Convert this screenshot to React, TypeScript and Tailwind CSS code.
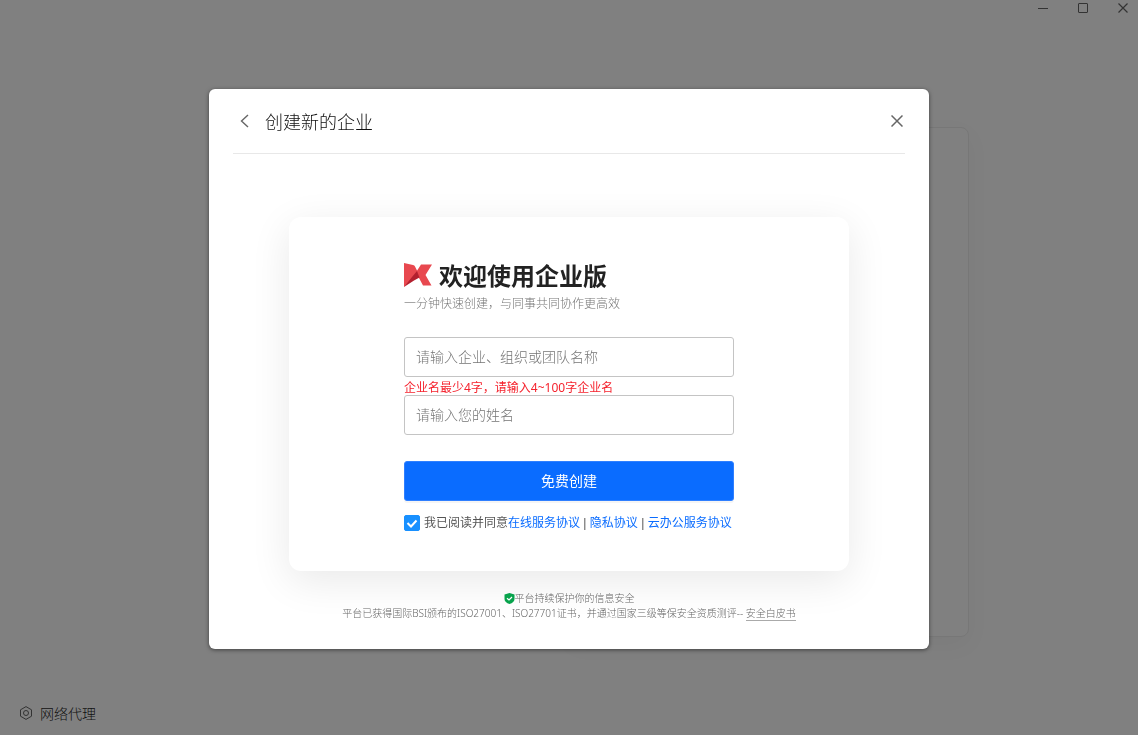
import React from "react";

function Logo() {
  return (
    <svg className="h-6 w-7 shrink-0" viewBox="0 0 28 24" aria-hidden="true">
      <path d="M0 0L9 2Q10.500 2.300 11 3.500L13.500 8.500L12 12L0 24Z" fill="#e8484f" />
      <path d="M17 1.500H28L21.500 12L27.500 22.500H19L15 15L12.500 8.500Z" fill="#e8484f" />
      <path d="M13 8L15.500 14.500L10 17.500L0 24L8 14Z" fill="#b3202f" />
    </svg>
  );
}

function WindowControls() {
  const icon = "h-3 w-3";
  const button = "flex h-4 w-10 items-center justify-center text-[#333]";
  return (
    <header className="flex justify-end">
      <div className="-mr-[5px] flex">
        <button type="button" aria-label="最小化" className={button}>
          <svg className={icon} viewBox="0 0 12 12" fill="none" stroke="currentColor"><path d="M1 6.500H11" /></svg>
        </button>
        <button type="button" aria-label="最大化" className={button}>
          <svg className={icon} viewBox="0 0 12 12" fill="none" stroke="currentColor"><rect x="1.500" y="1.500" width="9" height="9" rx="0.500" /></svg>
        </button>
        <button type="button" aria-label="关闭窗口" className={button}>
          <svg className={icon} viewBox="0 0 12 12" fill="none" stroke="currentColor" strokeWidth="1.200"><path d="M1.500 1.500L10.500 10.500M10.500 1.500L1.500 10.500" /></svg>
        </button>
      </div>
    </header>
  );
}

function CreateForm() {
  const field =
    "block h-10 w-full rounded-[3px] border border-[#c4c4c4] bg-white px-[11px] pb-0.5 text-sm text-[#222] outline-none placeholder:text-[#757575]";
  return (
    <form
      className="mx-auto w-full max-w-[560px] rounded-xl bg-white px-6 pt-11 pb-[38px] shadow-[0_10px_40px_rgba(0,0,0,0.09)]"
      onSubmit={(e) => e.preventDefault()}
    >
      <div className="mx-auto max-w-[330px]">
        <div className="flex items-center gap-[7px]">
          <Logo />
          <h2 className="text-2xl leading-7 font-bold text-[#222]">欢迎使用企业版</h2>
        </div>
        <p className="mt-1 text-xs leading-5 text-[#757575]">一分钟快速创建，与同事共同协作更高效</p>
        <div className="mt-6">
          <input type="text" aria-label="企业名称" placeholder="请输入企业、组织或团队名称" className={field} />
          <p
            role="alert"
            className="pt-1 font-['Noto_Sans','Noto_Sans_CJK_SC',sans-serif] text-xs leading-[14px] font-normal text-[#f5222d]"
          >
            企业名最少4字，请输入4~100字企业名
          </p>
          <input type="text" aria-label="姓名" placeholder="请输入您的姓名" className={field} />
        </div>
        <button
          type="submit"
          className="mt-[26px] h-10 w-full rounded-[3px] border border-[#2f7fff] bg-[#0a6cff] pb-0.5 text-sm font-normal text-white shadow-[0_2px_0_rgba(0,0,0,0.04)]"
        >
          免费创建
        </button>
        <div className="mt-3 flex items-center gap-1 font-['Liberation_Sans','Noto_Sans_CJK_SC',sans-serif] text-xs leading-5 font-normal whitespace-nowrap text-[#555]">
          <span className="relative flex h-4 w-4">
            <input
              id="agree"
              type="checkbox"
              defaultChecked
              className="peer h-4 w-4 appearance-none rounded-[2px] border border-[#1890ff] checked:bg-[#1890ff]"
            />
            <svg
              className="pointer-events-none absolute inset-0 hidden h-4 w-4 peer-checked:block"
              viewBox="0 0 16 16"
              fill="none"
              stroke="#fff"
              strokeWidth="2"
            >
              <path d="M3.500 8L7 11.500L12.500 5.500" />
            </svg>
          </span>
          <div>
            <label htmlFor="agree">我已阅读并同意</label>
            <a href="#service" className="text-[#0a6cff]">在线服务协议</a> |{" "}
            <a href="#privacy" className="text-[#0a6cff]">隐私协议</a> |{" "}
            <a href="#cloud" className="text-[#0a6cff]">云办公服务协议</a>
          </div>
        </div>
      </div>
    </form>
  );
}

function SecurityNote() {
  return (
    <div className="mt-5 text-center font-['Noto_Sans','Noto_Sans_CJK_SC',sans-serif] text-[10px] leading-[15px] text-[#666]">
      <p className="flex items-center justify-center">
        <svg className="h-[11px] w-[11px]" viewBox="0 0 11 11" aria-hidden="true">
          <path d="M5.500 0L10.500 1.500V6C10.500 8.500 8.500 10 5.500 11C2.500 10 0.500 8.500 0.500 6V1.500Z" fill="#07a34c" />
          <path d="M3 5.200L5 7L8 4" fill="none" stroke="#fff" strokeWidth="1.200" />
        </svg>
        平台持续保护你的信息安全
      </p>
      <p>
        平台已获得国际BSI颁布的ISO27001、ISO27701证书，并通过国家三级等保安全资质测评--{" "}
        <a href="#whitepaper" className="inline-block border-b border-[#aaa] leading-[14px]">安全白皮书</a>
      </p>
    </div>
  );
}

export default function App() {
  return (
    <div className="flex min-h-screen flex-col bg-[#808080] font-['Noto_Sans_CJK_SC',sans-serif] font-light">
      <WindowControls />
      <main className="flex flex-1 items-center justify-center pt-11">
        <div className="ml-100 h-[510px] w-100 rounded-lg border border-[#777] shadow-[0_8px_24px_rgba(0,0,0,0.04)]" />
      </main>
      <footer className="flex px-5 pb-3">
        <button type="button" className="flex items-center gap-2 text-sm leading-5 text-[#111]">
          <svg className="h-[14px] w-3 text-[#333]" viewBox="0 0 12 14" fill="none" stroke="currentColor" aria-hidden="true">
            <path d="M6 0.600L11.500 3.800V10.200L6 13.400L0.500 10.200V3.800Z" />
            <circle cx="6" cy="7" r="2.500" />
          </svg>
          网络代理
        </button>
      </footer>

      <div className="fixed inset-0 flex items-center justify-center pt-[3px]">
        <section
          role="dialog"
          aria-modal="true"
          aria-labelledby="dialog-title"
          className="w-full max-w-[720px] rounded-md bg-white px-6 pb-7 shadow-[0_1px_4px_rgba(0,0,0,0.5)]"
        >
          <header className="flex h-[65px] items-center border-b border-[#e8e8e8]">
            <button type="button" aria-label="返回" className="flex w-8 pl-[5px] text-[#666]">
              <svg className="h-[14px] w-3" viewBox="0 0 12 14" fill="none" stroke="currentColor" strokeWidth="1.400">
                <path d="M10 1L3.500 7L10 13" />
              </svg>
            </button>
            <h1 id="dialog-title" className="flex-1 text-lg text-[#111]">创建新的企业</h1>
            <button type="button" aria-label="关闭" className="mr-[2px] text-[#666]">
              <svg className="h-3 w-3" viewBox="0 0 12 12" fill="none" stroke="currentColor" strokeWidth="1.500">
                <path d="M0.500 0.500L11.500 11.500M11.500 0.500L0.500 11.500" />
              </svg>
            </button>
          </header>
          <div className="pt-[63px]">
            <CreateForm />
            <SecurityNote />
          </div>
        </section>
      </div>
    </div>
  );
}
